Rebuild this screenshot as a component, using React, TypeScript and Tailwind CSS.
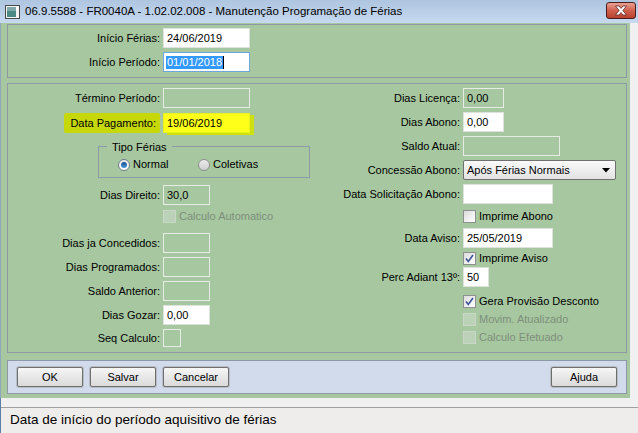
import React from 'react';

const Checkbox = ({ checked = false, disabled = false }: { checked?: boolean; disabled?: boolean }) => (
    <span
        className={`w-[13px] h-[13px] flex items-center justify-center border ${
            disabled
                ? 'border-[#c9d8c6] bg-[#bcd2b8]'
                : 'border-[#8e8f8f] bg-gradient-to-br from-[#dcdcdc] to-[#ffffff]'
        }`}>
        {checked && (
            <svg width="9" height="9" viewBox="0 0 9 9">
                <path d="M1 4.5 L3.3 7.5 L8 1" fill="none" stroke="#3b5596" strokeWidth="1.6" />
            </svg>
        )}
    </span>
);

const CheckRow = ({
    label,
    checked,
    disabled,
}: {
    label: string;
    checked?: boolean;
    disabled?: boolean;
}) => (
    <div className="flex items-center h-[13px] gap-[3px]">
        <Checkbox checked={checked} disabled={disabled} />
        <span className={disabled ? 'text-[#7f8f7d]' : 'text-black'}>{label}</span>
    </div>
);

const Field = ({
    label,
    labelW,
    w,
    value = '',
    white = false,
    h = 'h-[20px]',
}: {
    label: string;
    labelW: string;
    w: string;
    value?: string;
    white?: boolean;
    h?: string;
}) => (
    <div className="flex items-center">
        <div className={`${labelW} text-right pr-[3px] whitespace-nowrap`}>{label}</div>
        <div
            className={`${w} ${h} border flex items-center px-[3px] ${
                white ? 'bg-white border-[#dde2dc]' : 'border-[#e6ece4]'
            }`}>
            {value}
        </div>
    </div>
);

const Button = ({ label }: { label: string }) => (
    <div className="w-[68px] h-[22px] p-px rounded-[3px] bg-[#b8bcc4]">
        <div className="w-full h-full rounded-[2px] border border-[#707070] bg-gradient-to-b from-[#f6f6f6] to-[#dadada] flex items-center justify-center text-black">
            {label}
        </div>
    </div>
);

export default function App() {
    const L = 'w-[155px]';
    const R = 'w-[143px]';
    return (
        <div className="w-[638px] h-[433px] overflow-hidden bg-[#f0f0f0] font-['Liberation_Sans',Arial,sans-serif] text-[11px] text-black flex flex-col">
            {/* title bar */}
            <div className="h-[23px] shrink-0 flex items-center bg-gradient-to-b from-[#aec5e0] to-[#c6d9ef] pl-[5px] pr-[2px]">
                <svg width="15" height="14" viewBox="0 0 15 14">
                    <rect x="0.5" y="0.5" width="14" height="13" fill="#f4f4f4" stroke="#4a4a4a" />
                    <rect x="2" y="2" width="9" height="10" fill="#4b8a84" />
                    <rect x="2" y="2" width="9" height="4" fill="#7fa9a6" />
                    <rect x="11" y="2" width="2" height="3" fill="#ffffff" />
                </svg>
                <span className="ml-[5px] text-[11.5px] text-black whitespace-nowrap">
                    06.9.5588 - FR0040A - 1.02.02.008 - Manutenção Programação de Férias
                </span>
                <div className="ml-auto w-[30px] h-[17px] mt-[-3px] rounded-[3px] border border-[#4a1c1c] bg-gradient-to-b from-[#e9a192] via-[#d0604d] to-[#b8412f] flex items-center justify-center">
                    <svg width="14" height="11" viewBox="0 0 14 11">
                        <path
                            d="M1.5 1 L5 1 L7 3.4 L9 1 L12.5 1 L8.8 5.5 L12.5 10 L9 10 L7 7.6 L5 10 L1.5 10 L5.2 5.5 Z"
                            fill="#ffffff"
                            stroke="#5a2a2a"
                            strokeWidth="0.8"
                        />
                    </svg>
                </div>
            </div>

            {/* body */}
            <div className="flex h-[375px] shrink-0">
                <div className="w-[630px] bg-[#a6c79f] border-l border-[#8fa6bf] pl-[6px] pr-[3px] pt-px flex flex-col">
                    {/* top box */}
                    <div className="h-[54px] border border-[#8d99a7] pt-[3px] flex flex-col gap-[4px]">
                        <Field label="Início Férias:" labelW={L} w="w-[87px]" value="24/06/2019" white />
                        <div className="flex items-center">
                            <div className={`${L} text-right pr-[3px]`}>Início Período:</div>
                            <div className="w-[87px] h-[20px] border border-[#6fa6de] bg-white flex items-center px-[2px]">
                                <span className="bg-[#3399ff] text-white px-px leading-[13px]">01/01/2018</span>
                                <span className="w-px h-[13px] bg-black" />
                            </div>
                        </div>
                    </div>

                    {/* main box */}
                    <div className="mt-[5px] h-[270px] border border-[#8d99a7] flex">
                        {/* left column */}
                        <div className="w-[312px] pt-[4px] flex flex-col">
                            <Field label="Término Período:" labelW={L} w="w-[87px]" />
                            <div className="flex items-center mt-[5px]">
                                <div className={`${L} text-right pr-[3px]`}>
                                    <span className="bg-[#c6d80a] pl-[6px] pr-[4px] py-[4px] rounded-[2px]">Data Pagamento:</span>
                                </div>
                                <div className="w-[87px] h-[20px] bg-[#ffff1a] border border-[#e8f020] shadow-[4px_2px_0_#cfe010] flex items-center px-[3px]">
                                    19/06/2019
                                </div>
                            </div>

                            {/* tipo ferias group */}
                            <div className="relative ml-[90px] mt-[13px] w-[212px] h-[32px] border border-[#8d99a7] pl-[19px] pt-[11px] flex">
                                <span className="absolute left-[8px] top-[-8px] bg-[#a6c79f] px-[5px]">Tipo Férias</span>
                                <div className="w-[80px] flex items-center gap-[3px] h-[13px]">
                                    <span className="w-[12px] h-[12px] rounded-full border border-[#6e7c8a] bg-gradient-to-b from-[#e8e8e8] to-[#ffffff] flex items-center justify-center">
                                        <span className="w-[6px] h-[6px] rounded-full bg-gradient-to-b from-[#1b4f8f] to-[#4b9ad8]" />
                                    </span>
                                    <span>Normal</span>
                                </div>
                                <div className="flex items-center gap-[3px] h-[13px]">
                                    <span className="w-[12px] h-[12px] rounded-full border border-[#8e8f8f] bg-gradient-to-b from-[#ececec] to-[#cfcfcf]" />
                                    <span>Coletivas</span>
                                </div>
                            </div>

                            <div className="mt-[7px]">
                                <Field label="Dias Direito:" labelW={L} w="w-[47px]" value="30,0" />
                            </div>
                            <div className="mt-[5px] pl-[155px]">
                                <CheckRow label="Calculo Automatico" disabled />
                            </div>
                            <div className="mt-[10px] flex flex-col gap-[4px]">
                                <Field label="Dias ja Concedidos:" labelW={L} w="w-[47px]" />
                                <Field label="Dias Programados:" labelW={L} w="w-[47px]" />
                                <Field label="Saldo Anterior:" labelW={L} w="w-[47px]" />
                                <Field label="Dias Gozar:" labelW={L} w="w-[47px]" value="0,00" white />
                                <Field label="Seq Calculo:" labelW={L} w="w-[18px]" h="h-[18px]" />
                            </div>
                        </div>

                        {/* right column */}
                        <div className="flex-1 pt-[4px] flex flex-col">
                            <div className="flex flex-col gap-[4px]">
                                <Field label="Dias Licença:" labelW={R} w="w-[41px]" value="0,00" />
                                <Field label="Dias Abono:" labelW={R} w="w-[41px]" value="0,00" white />
                                <Field label="Saldo Atual:" labelW={R} w="w-[97px]" />
                                <div className="flex items-center">
                                    <div className={`${R} text-right pr-[3px]`}>Concessão Abono:</div>
                                    <div className="w-[153px] h-[20px] rounded-[2px] border border-[#707070] bg-gradient-to-b from-[#fafafa] to-[#e2e2e2] flex items-center pl-[3px] pr-[5px]">
                                        <span>Após Férias Normais</span>
                                        <svg className="ml-auto" width="8" height="5" viewBox="0 0 8 5">
                                            <path d="M0 0 L8 0 L4 4.5 Z" fill="#000" />
                                        </svg>
                                    </div>
                                </div>
                                <Field label="Data Solicitação Abono:" labelW={R} w="w-[90px]" white />
                            </div>
                            <div className="mt-[6px] pl-[143px]">
                                <CheckRow label="Imprime Abono" />
                            </div>
                            <div className="mt-[5px]">
                                <Field label="Data Aviso:" labelW={R} w="w-[90px]" value="25/05/2019" white />
                            </div>
                            <div className="mt-[4px] pl-[143px]">
                                <CheckRow label="Imprime Aviso" checked />
                            </div>
                            <div className="mt-[2px]">
                                <Field label="Perc Adiant 13º:" labelW={R} w="w-[26px]" value="50" white />
                            </div>
                            <div className="mt-[8px] pl-[143px] flex flex-col gap-[5px]">
                                <CheckRow label="Gera Provisão Desconto" checked />
                                <CheckRow label="Movim. Atualizado" disabled />
                                <CheckRow label="Calculo Efetuado" disabled />
                            </div>
                        </div>
                    </div>

                    {/* buttons */}
                    <div className="mt-[7px] h-[34px] border border-[#8d99a7] bg-[#d2dbeb] flex items-center pl-[8px] pr-[8px] gap-[5px]">
                        <Button label="OK" />
                        <Button label="Salvar" />
                        <Button label="Cancelar" />
                        <div className="ml-auto">
                            <Button label="Ajuda" />
                        </div>
                    </div>
                </div>
                <div className="flex-1 bg-[#f0f0f0]" />
            </div>

            {/* status */}
            <div className="flex-1 flex flex-col border-l border-[#5c7da6]">
                <div className="h-[10px] bg-[#f0f0f0] border-b border-[#a0a0a0]" />
                <div className="flex-1 bg-[#efedeb] pl-[9px] flex items-center text-[13.5px] text-black">
                    Data de início do período aquisitivo de férias
                </div>
            </div>
        </div>
    );
}
